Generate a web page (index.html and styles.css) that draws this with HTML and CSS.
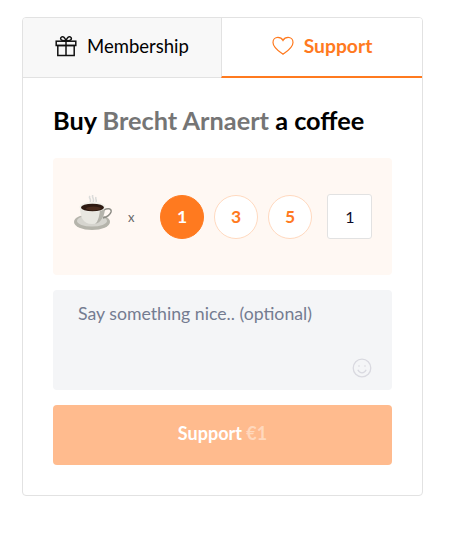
FILE: index.html
```html
<!doctype html>
<html lang="en">
  <head>
    <meta charset="UTF-8" />
    <meta name="viewport" content="width=device-width, initial-scale=1.0" />
    <title>Buy Brecht Arnaert a coffee</title>
    <link rel="stylesheet" href="styles.css">
  </head>
  <body>
    <div class="card">
      <div class="tabs">
        <div class="tab">
          <svg class="tab-icon" width="22" height="22" viewBox="0 0 22 22" fill="none" stroke="#111" stroke-width="1.5">
            <rect x="1.2" y="6.2" width="19.6" height="4.3" />
            <rect x="2.8" y="10.5" width="16.4" height="10" />
            <path d="M11 6.2V20.5" />
            <path d="M11 6C8.5 6 5.6 5.6 5.6 3.6 5.6 2 7.6 1.2 8.8 2.2 10.2 3.3 11 6 11 6ZM11 6C13.5 6 16.4 5.6 16.4 3.6 16.4 2 14.4 1.2 13.2 2.2 11.8 3.3 11 6 11 6Z" />
          </svg>
          <span>Membership</span>
        </div>
        <div class="tab active">
          <svg class="tab-icon" width="22" height="20" viewBox="0 0 22 20" fill="none" stroke="#ff7a1f" stroke-width="1.2">
            <path d="M11 18.2C7.5 15.6 1 11.6 1 6.4 1 3.4 3.3 1.4 5.9 1.4 8 1.4 9.9 2.4 11 4.4 12.1 2.4 14 1.4 16.1 1.4 18.7 1.4 21 3.4 21 6.4 21 11.6 14.5 15.6 11 18.2Z" />
          </svg>
          <span>Support</span>
        </div>
      </div>

      <div class="content">
        <h1>Buy <span class="name">Brecht Arnaert</span> a coffee</h1>

        <div class="picker">
          <svg class="cup" width="38" height="36" viewBox="0 0 38 36">
            <path d="M16 1c-2 2 2 3 0 6M19 0c-2 2 2 4 0 7M22 2c-1 2 1 3 0 5" fill="none" stroke="#dcdcda" stroke-width="1.6" />
            <ellipse cx="18" cy="27" rx="18" ry="8" fill="#b5b4ab" />
            <ellipse cx="18" cy="26" rx="15" ry="5.5" fill="#d6d5cf" />
            <path d="M6 12c0 10 3 17 12 17s13-7 13-17Z" fill="#e8e7e1" />
            <path d="M21 29c6-1 10-8 10-17h-5c0 8-2 15-5 17Z" fill="#b4b3ab" />
            <path d="M30 15c3-2 8-2 7 2-1 3-4 5-8 6" fill="none" stroke="#8f8e87" stroke-width="1.5" />
            <ellipse cx="18.5" cy="12" rx="13" ry="5" fill="#f1f0ea" />
            <ellipse cx="18.5" cy="12.5" rx="11.5" ry="3.8" fill="#2e1a12" />
            <ellipse cx="19.5" cy="13.5" rx="7.5" ry="1.9" fill="#4a2c1e" />
          </svg>
          <span class="times">x</span>
          <div class="amounts">
            <div class="amount selected">1</div>
            <div class="amount">3</div>
            <div class="amount">5</div>
          </div>
          <div class="qty">1</div>
        </div>

        <div class="message">
          <span class="placeholder">Say something nice.. (optional)</span>
          <svg class="smiley" width="20" height="20" viewBox="0 0 20 20" fill="none" stroke="#d9d9e0" stroke-width="1.3">
            <circle cx="10" cy="10" r="8.8" />
            <circle cx="7" cy="8" r="0.8" fill="#d9d9e0" stroke="none" />
            <circle cx="13" cy="8" r="0.8" fill="#d9d9e0" stroke="none" />
            <path d="M5.8 11.8c1 2 2.500 3 4.200 3s3.200-1 4.200-3" />
          </svg>
        </div>

        <div class="submit"><span>Support <span class="price">€1</span></span></div>
      </div>
    </div>
  </body>
</html>
```

FILE: styles.css
```css
body {
  font-family: Lato, "Open Sans", sans-serif;
  margin: 0;
  padding: 17px 44px 39px 22px;
  color: #000;
  background: #fff;
}
.card {
  border: 1px solid #e2e2e2;
  border-radius: 4px;
  overflow: hidden;
}
.tabs {
  display: flex;
  height: 60px;
}
.tab {
  flex: 0 0 198px;
  display: flex;
  align-items: center;
  justify-content: center;
  gap: 10px;
  box-sizing: border-box;
  padding-bottom: 3px;
  background: #f8f8f8;
  border-bottom: 1px solid #e2e2e2;
  font-size: 18.5px;
}
.tab.active {
  flex: 1;
  background: #fff;
  border-left: 1px solid #e2e2e2;
  border-bottom: 2px solid #ff7a1f;
  color: #ff7a1f;
  font-size: 19.3px;
  font-weight: 700;
}
.tab-icon {
  flex: none;
}
.content {
  padding: 27px 30px 30px;
}
h1 {
  margin: 0 0 23px;
  font-size: 25.3px;
  line-height: 30px;
  font-weight: 700;
}
.name {
  color: #757575;
}
.picker {
  display: flex;
  align-items: center;
  height: 117px;
  padding-left: 21px;
  background: #fff8f3;
  border-radius: 4px;
}
.cup {
  flex: none;
  margin-bottom: 7px;
}
.times {
  margin: 0 26px 0 16px;
  font-size: 13px;
  color: #666;
}
.amounts {
  display: flex;
  gap: 10px;
}
.amount {
  width: 44px;
  height: 44px;
  box-sizing: border-box;
  display: flex;
  align-items: center;
  justify-content: center;
  padding-right: 1px;
  background: #fff;
  border: 1px solid #ffd9bf;
  border-radius: 50%;
  color: #ff7a1f;
  font-size: 17.5px;
  font-weight: 700;
}
.amount.selected {
  background: #ff7a1f;
  border-color: #ff7a1f;
  color: #fff;
}
.qty {
  width: 45px;
  height: 45px;
  box-sizing: border-box;
  display: flex;
  align-items: center;
  justify-content: center;
  margin-left: 15px;
  background: #fff;
  border: 1px solid #e2e2e2;
  border-radius: 3px;
  font-size: 16px;
  color: #0a0a2a;
}
.message {
  position: relative;
  height: 100px;
  box-sizing: border-box;
  margin-top: 15px;
  padding: 14px 25px;
  background: #f4f5f7;
  border-radius: 4px;
  font-size: 17.7px;
  line-height: 20px;
  color: #747c91;
}
.smiley {
  position: absolute;
  right: 20px;
  bottom: 12px;
}
.submit {
  display: flex;
  align-items: center;
  justify-content: center;
  height: 60px;
  box-sizing: border-box;
  margin-top: 15px;
  padding-bottom: 4px;
  background: #ffbb8e;
  border-radius: 4px;
  color: #fff;
  font-size: 18px;
  font-weight: 700;
}
.price {
  color: #ffd8bd;
}
```
